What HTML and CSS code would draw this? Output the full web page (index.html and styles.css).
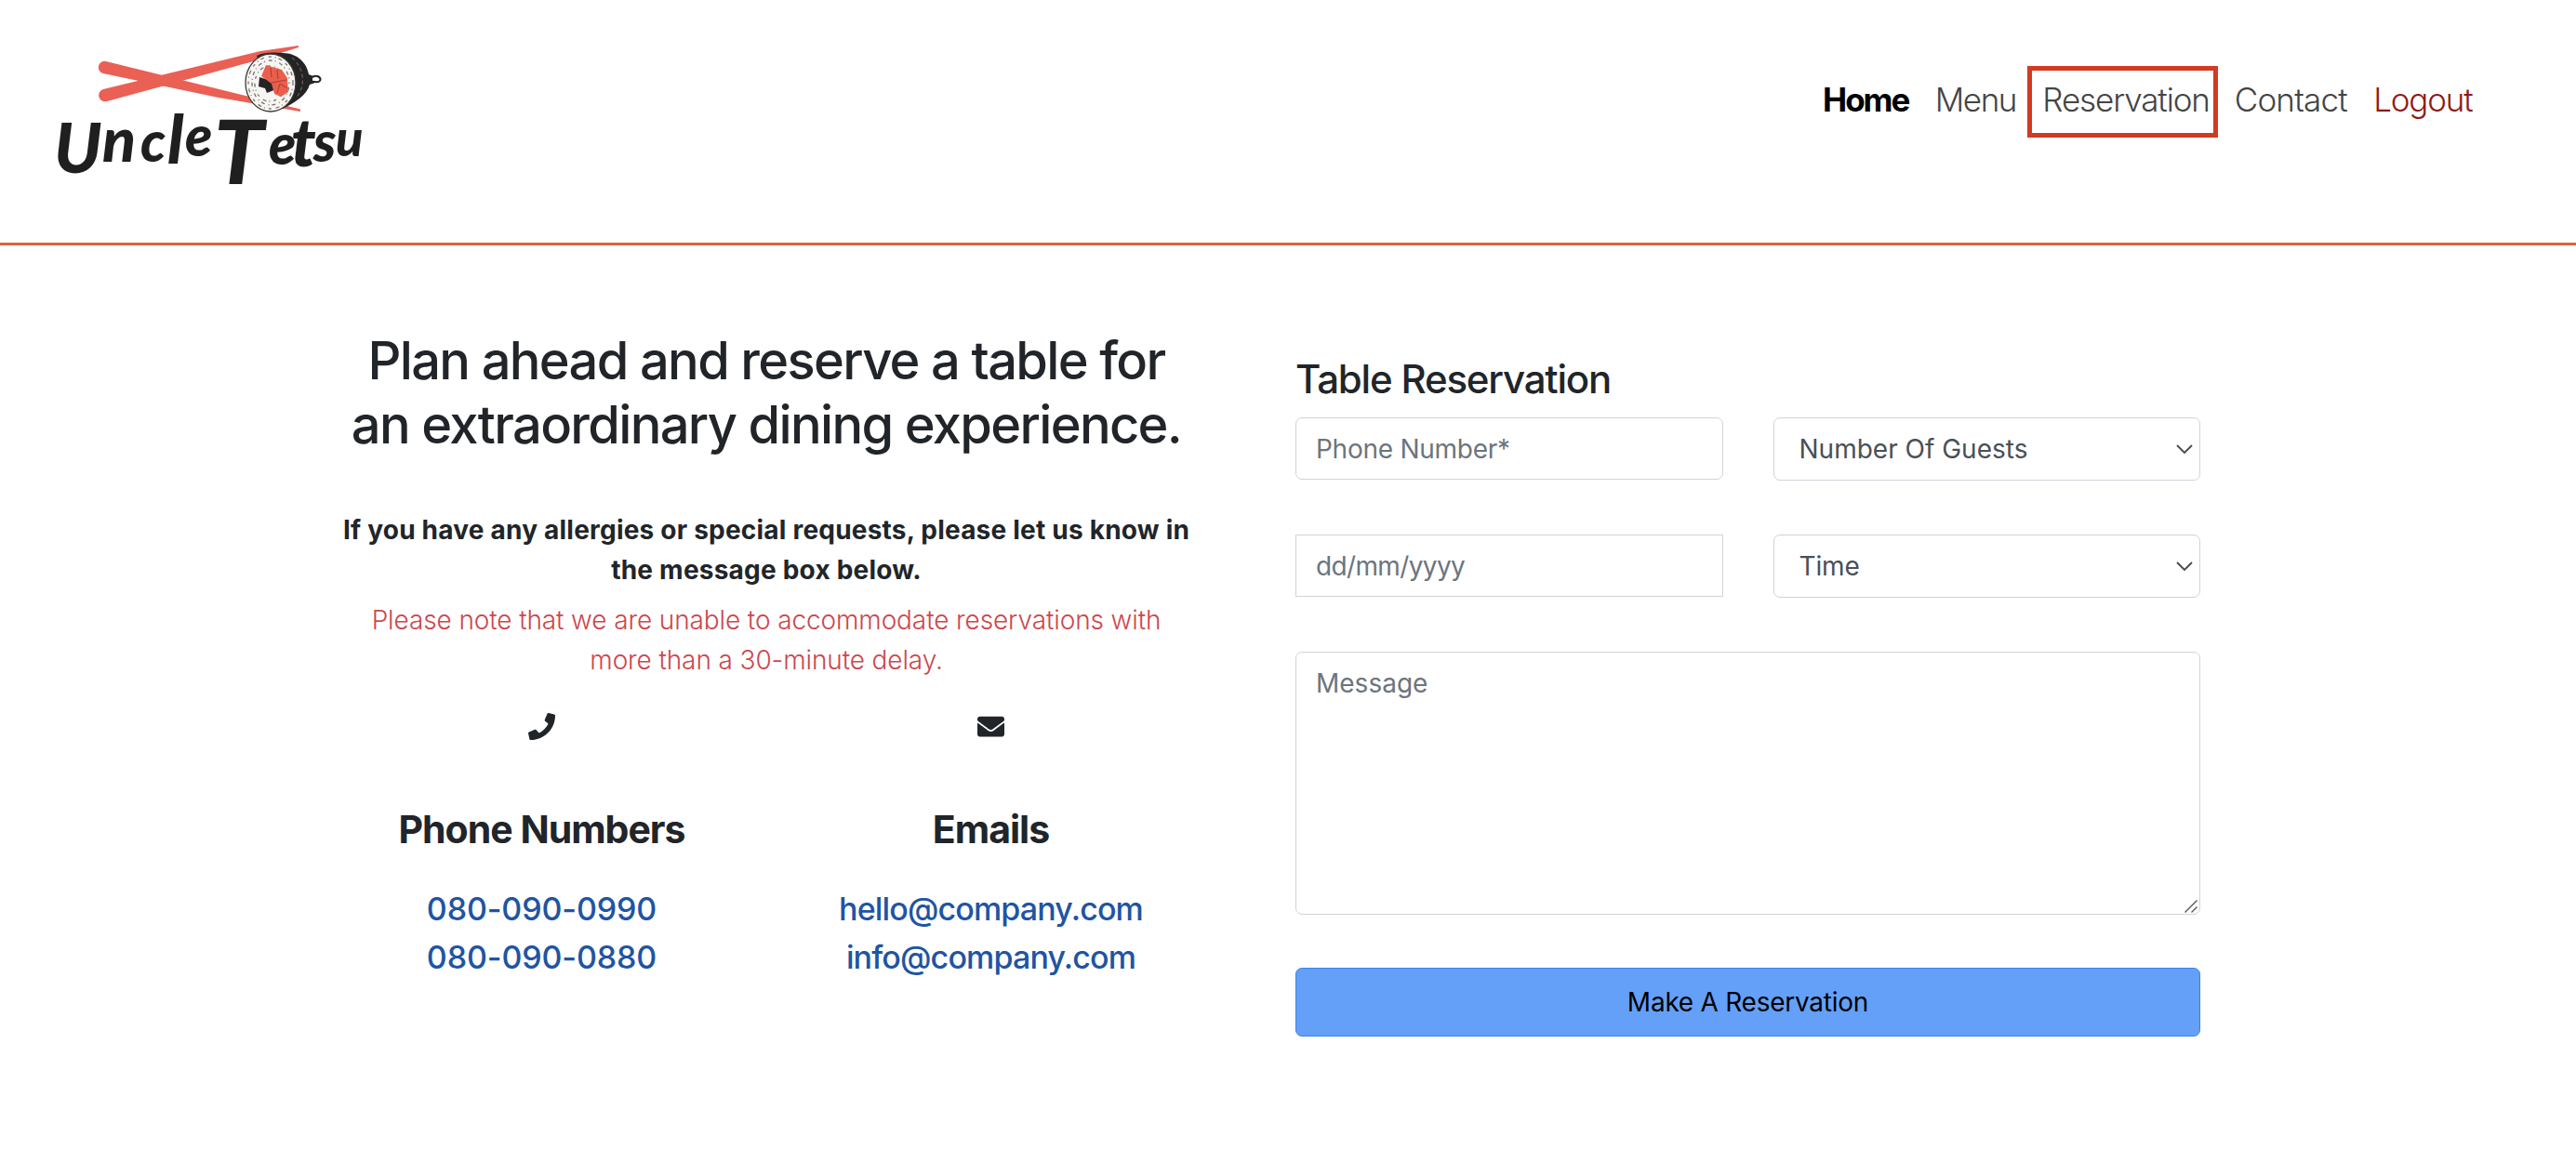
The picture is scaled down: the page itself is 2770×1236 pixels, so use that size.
FILE: index.html
```html
<!DOCTYPE html>
<html lang="en">
<head>
<meta charset="utf-8">
<title>Uncle Tetsu - Table Reservation</title>
<link rel="stylesheet" href="styles.css">
</head>
<body>
<header class="site-header">
  <a class="logo" href="#">
    <svg width="370" height="220" viewBox="0 0 370 220">
      <g class="sticks">
        <path d="M74 36 L283 87.500 V90 L195 75 L71 49 A6.500 6.500 0 0 1 74 36Z"/>
        <path d="M71 66 L240 25 L281 19 V21 L240 34 L75 79 A6.500 6.500 0 0 1 71 66Z"/>
      </g>
      <path class="ink" d="M236 30 C246 25 258 27 264 27 C280 27 290 38 292 50 L297 52 L299 59 L293 61 C290 72 278 80 264 87Z"/>
      <path class="loop" d="M295 53.500 C299 50 305 52 304.500 56 C303 60 298 58 295 57.500Z"/>
      <ellipse class="rice" cx="251" cy="59" rx="27" ry="31"/>
      <ellipse class="grain" cx="251" cy="59" rx="24" ry="28"/>
      <ellipse class="grain shifted" cx="251" cy="59" rx="20" ry="24"/>
      <ellipse class="grain" cx="250" cy="60" rx="16" ry="19"/>
      <path class="ink" d="M239 53 L252 57 L257 66 L247 70 L245 65 L238 63Z"/>
      <path class="salmon" d="M246 40 L263 45 L269 54 L270 69 L262 74 L255 71 L252 60 L241 52Z"/>
      <path class="vein" d="M251 43 L252 53 M258 45 L259 55 M252 59 L268 56 M258 70 L261 60 L269 65"/>
      <path class="sheen" d="M274 32 C288 44 289 63 278 76"/>
      <text class="wordmark"><tspan class="g-u" x="18" y="156">U</tspan><tspan class="g-n" x="70" y="144">n</tspan><tspan class="g-m" x="111" y="144">c</tspan><tspan class="g-l" x="140" y="146">l</tspan><tspan class="g-m" x="159" y="138">e</tspan> <tspan class="g-t" x="190" y="168">T</tspan><tspan class="g-m" x="249" y="147">e</tspan><tspan class="g-l" x="273" y="149">t</tspan><tspan class="g-m" x="297" y="144">s</tspan><tspan class="g-s" x="321" y="138">u</tspan></text>
    </svg>
  </a>
  <nav class="nav">
    <a class="home" href="#">Home</a>
    <a class="menu" href="#">Menu</a>
    <a class="reservation" href="#">Reservation</a>
    <a class="contact" href="#">Contact</a>
    <a class="logout" href="#">Logout</a>
  </nav>
</header>
<main class="page">
  <section class="intro">
    <h2>Plan ahead and reserve a table for<br>an extraordinary dining experience.</h2>
    <p class="allergies">If you have any allergies or special requests, please let us know in<br>the message box below.</p>
    <p class="delay">Please note that we are unable to accommodate reservations with<br>more than a 30-minute delay.</p>
    <div class="contacts">
      <div class="contact-card">
        <svg class="icon" viewBox="0 0 512 512"><path d="M493.400 24.600l-104-24c-11.300-2.600-22.900 3.300-27.500 13.900l-48 112c-4.200 9.800-1.400 21.300 6.900 28l60.600 49.600c-36 76.700-98.900 140.500-177.200 177.200l-49.600-60.600c-6.800-8.300-18.200-11.100-28-6.900l-112 48C3.900 366.500-2 378.100.6 389.400l24 104C27.100 504.200 36.700 512 48 512c256.100 0 464-207.500 464-464 0-11.200-7.700-20.900-18.600-23.400z"/></svg>
        <h4>Phone Numbers</h4>
        <a class="tel" href="#">080-090-0990</a>
        <a class="tel" href="#">080-090-0880</a>
      </div>
      <div class="contact-card">
        <svg class="icon" viewBox="0 0 512 512"><path d="M502.300 190.800c3.900-3.100 9.700-.2 9.700 4.700V400c0 26.500-21.500 48-48 48H48c-26.500 0-48-21.500-48-48V195.600c0-5 5.700-7.800 9.700-4.700 22.400 17.400 52.100 39.500 154.100 113.600 21.100 15.400 56.700 47.800 92.200 47.600 35.700.3 72-32.800 92.300-47.600 102-74.100 131.600-96.300 154-113.700zM256 320c23.200.4 56.600-29.200 73.400-41.400 132.700-96.300 142.800-104.700 173.400-128.700 5.800-4.500 9.200-11.500 9.200-18.900v-19c0-26.500-21.500-48-48-48H48c-26.500 0-48 21.500-48 48v19c0 7.400 3.400 14.300 9.200 18.900 30.600 23.900 40.700 32.400 173.400 128.700 16.800 12.200 50.200 41.800 73.400 41.400z"/></svg>
        <h4>Emails</h4>
        <a class="mail" href="#">hello@company.com</a>
        <a class="mail" href="#">info@company.com</a>
      </div>
    </div>
  </section>
  <form class="reserve">
    <h3>Table Reservation</h3>
    <div class="fields">
      <input class="control phone" type="text" placeholder="Phone Number*">
      <div class="select-wrap">
        <select class="control guests"><option>Number Of Guests</option></select>
        <svg class="chevron" viewBox="0 0 18 10"><path d="M1 1 L9 9 L17 1"/></svg>
      </div>
      <input class="control date" type="text" placeholder="dd/mm/yyyy">
      <div class="select-wrap">
        <select class="control time"><option>Time</option></select>
        <svg class="chevron" viewBox="0 0 18 10"><path d="M1 1 L9 9 L17 1"/></svg>
      </div>
      <div class="message-wrap">
        <textarea class="control message" placeholder="Message"></textarea>
        <svg class="grip" viewBox="0 0 14 14"><path d="M.5 13.500 L13.500 .5 M7.500 13.500 L13.500 7.500"/></svg>
      </div>
    </div>
    <button class="submit" type="button">Make A Reservation</button>
  </form>
</main>
</body>
</html>
```
FILE: styles.css
```css
*, *::before, *::after { box-sizing: border-box; }

body {
  margin: 0;
  background: #fff;
  color: #212529;
  font-family: Inter, "Liberation Sans", sans-serif;
  font-size: 28px;
  line-height: 43.2px;
}

h2, h3, h4, p { margin: 0; }
a { text-decoration: none; }

/* Header */
.site-header {
  display: flex;
  justify-content: space-between;
  align-items: flex-start;
  height: 264px;
  padding: 30px 111.5px 0 40px;
  border-bottom: 3px solid #de6438;
}

.logo { display: block; line-height: 0; }
.sticks { fill: #ea6055; }
.ink { fill: #242424; }
.loop { fill: #fff; stroke: #242424; stroke-width: 2; }
.rice { fill: #f7f5f2; stroke: #3a3838; stroke-width: 1.3; }
.grain { fill: none; stroke: #77716d; stroke-width: 1.3; stroke-dasharray: 3 4 1 3 4 5; }
.shifted { stroke-dasharray: 1 4 4 3; }
.salmon { fill: #ea5f4c; }
.vein { fill: none; stroke: #a93b30; stroke-width: 1; }
.sheen { fill: none; stroke: #77716d; stroke-width: 1; stroke-dasharray: 4 3; }
.wordmark { font-family: Lato, sans-serif; font-weight: 900; font-style: italic; fill: #1f1f1f; }
.g-u { font-size: 74px; }
.g-n { font-size: 66px; }
.g-m { font-size: 60px; }
.g-s { font-size: 54px; }
.g-l { font-size: 72px; }
.g-t { font-size: 96px; }

.nav {
  display: flex;
  gap: 28.4px;
  margin-top: 50px;
  font-size: 35px;
  font-weight: 300;
  line-height: 54px;
}
.nav a { color: #444; }
.nav .home { color: #000; font-weight: 700; letter-spacing: -2.02px; }
.nav .menu { letter-spacing: -1.46px; }
.nav .reservation { position: relative; letter-spacing: -1.12px; }
.nav .reservation::after {
  content: "";
  position: absolute;
  left: -16px;
  top: -9px;
  width: 205px;
  height: 77px;
  border: 5px solid #d13b22;
}
.nav .contact { margin-left: -1.5px; letter-spacing: -.8px; }
.nav .logout { color: #8f1a14; letter-spacing: -1.19px; }

/* Page columns */
.page {
  display: grid;
  grid-template-columns: 966px 973px;
  gap: 86px;
  padding: 90px 0 0 341px;
}

.intro { text-align: center; white-space: nowrap; }
.intro h2 { font-size: 56px; font-weight: 500; line-height: 69px; letter-spacing: -1.66px; }
.allergies { margin-top: 57px; font-weight: 700; letter-spacing: .216px; }
.delay { margin-top: 10.6px; color: #cc474d; font-weight: 300; letter-spacing: -.11px; }

.contacts { display: grid; grid-template-columns: 1fr 1fr; margin-top: 34.6px; }
.contact-card { display: flex; flex-direction: column; align-items: center; }
.icon { width: 29px; height: 29px; fill: #212529; }
.contact-card h4 {
  margin: 70px 0 33.5px;
  font-size: 41px;
  font-weight: 700;
  line-height: 52px;
  letter-spacing: -1px;
}
.contact-card a { color: #2054a3; font-size: 34px; font-weight: 500; line-height: 52px; }
.tel { letter-spacing: -.12px; }
.mail { letter-spacing: -.84px; }

/* Reservation form */
.reserve { padding-top: 28px; }
.reserve h3 { font-size: 42px; font-weight: 500; line-height: 52px; letter-spacing: -1.19px; }
.fields {
  display: grid;
  grid-template-columns: 1fr 1fr;
  grid-template-rows: 68px 68px 283px;
  gap: 58px 54px;
  align-items: start;
  margin-top: 15px;
}
.control {
  display: block;
  width: 100%;
  height: 67px;
  margin: 0;
  padding: 0 21px;
  border: 1px solid #ced4da;
  border-radius: 7px;
  background: #fff;
  color: #495057;
  font: 400 28px/43.2px Inter, "Liberation Sans", sans-serif;
  appearance: none;
  outline: none;
}
.control::placeholder { color: #6c757d; opacity: 1; }
.phone { letter-spacing: -.26px; }
.date { border-radius: 0; letter-spacing: -.64px; }
select.control { height: 68px; padding: 2px 27px 0; }
.time { letter-spacing: -.13px; }
.select-wrap, .message-wrap { position: relative; }
.message-wrap { grid-column: 1 / -1; }
.message { height: 283px; padding: 12px 21px; resize: none; }
.chevron { position: absolute; right: 8px; top: 29px; width: 18px; height: 10px; fill: none; stroke: #45494d; stroke-width: 1.8; }
.grip { position: absolute; right: 3px; bottom: 2px; width: 14px; height: 14px; stroke: #555; stroke-width: 1.4; }

.submit {
  display: block;
  width: 100%;
  height: 74px;
  margin-top: 57px;
  padding: 2px 0 0;
  border: 1px solid #3b7ff0;
  border-radius: 7px;
  background: #64a0f8;
  color: #000;
  font: 400 28px/43.2px Inter, "Liberation Sans", sans-serif;
  letter-spacing: -.25px;
}
```
